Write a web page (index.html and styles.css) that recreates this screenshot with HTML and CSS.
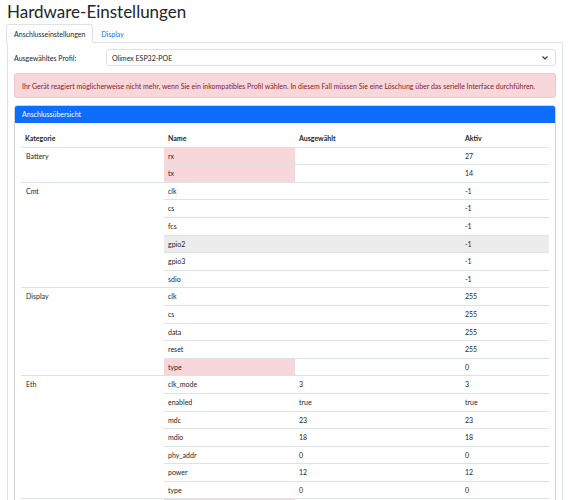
FILE: index.html
```html
<!DOCTYPE html>
<html lang="de">
<head>
    <meta charset="UTF-8">
    <meta name="viewport" content="width=device-width, initial-scale=1.0">
    <title>Hardware-Einstellungen</title>
    <link rel="stylesheet" href="styles.css">
</head>
<body>

<div class="page">
    <h1 class="title">Hardware-Einstellungen</h1>

    <ul class="tabs">
        <li class="tab active">Anschlusseinstellungen</li>
        <li class="tab">Display</li>
    </ul>

    <div class="tab-pane">
        <div class="profile-row">
            <label class="profile-label">Ausgewähltes Profil:</label>
            <div class="select">
                <span>Olimex ESP32-POE</span>
                <svg class="chevron" width="8" height="6" viewBox="0 0 8 6">
                    <polyline points="1.5,1.5 4,4 6.5,1.5" fill="none" stroke="#343a40" stroke-width="1.2"/>
                </svg>
            </div>
        </div>

        <div class="alert">
            Ihr Gerät reagiert möglicherweise nicht mehr, wenn Sie ein inkompatibles Profil wählen. In diesem Fall müssen Sie eine Löschung über das serielle Interface durchführen.
        </div>

        <div class="card">
            <div class="card-header">Anschlussübersicht</div>
            <div class="card-body">
                <table class="pins">
                    <colgroup>
                        <col class="col-cat">
                        <col class="col-name">
                        <col class="col-sel">
                        <col class="col-act">
                    </colgroup>
                    <thead>
                        <tr>
                            <th>Kategorie</th>
                            <th>Name</th>
                            <th>Ausgewählt</th>
                            <th>Aktiv</th>
                        </tr>
                    </thead>
                    <tbody>
                        <tr><td class="cat" rowspan="2">Battery</td><td class="diff">rx</td><td></td><td>27</td></tr>
                        <tr><td class="diff">tx</td><td></td><td>14</td></tr>

                        <tr><td class="cat" rowspan="6">Cmt</td><td>clk</td><td></td><td>-1</td></tr>
                        <tr><td>cs</td><td></td><td>-1</td></tr>
                        <tr><td>fcs</td><td></td><td>-1</td></tr>
                        <tr class="hover"><td>gpio2</td><td></td><td>-1</td></tr>
                        <tr><td>gpio3</td><td></td><td>-1</td></tr>
                        <tr><td>sdio</td><td></td><td>-1</td></tr>

                        <tr><td class="cat" rowspan="5">Display</td><td>clk</td><td></td><td>255</td></tr>
                        <tr><td>cs</td><td></td><td>255</td></tr>
                        <tr><td>data</td><td></td><td>255</td></tr>
                        <tr><td>reset</td><td></td><td>255</td></tr>
                        <tr><td class="diff">type</td><td></td><td>0</td></tr>

                        <tr><td class="cat" rowspan="7">Eth</td><td>clk_mode</td><td>3</td><td>3</td></tr>
                        <tr><td>enabled</td><td>true</td><td>true</td></tr>
                        <tr><td>mdc</td><td>23</td><td>23</td></tr>
                        <tr><td>mdio</td><td>18</td><td>18</td></tr>
                        <tr><td>phy_addr</td><td>0</td><td>0</td></tr>
                        <tr><td>power</td><td>12</td><td>12</td></tr>
                        <tr><td>type</td><td>0</td><td>0</td></tr>

                        <tr><td class="cat" rowspan="2">Led</td><td class="diff">led0</td><td></td><td>-1</td></tr>
                        <tr><td>led1</td><td></td><td>-1</td></tr>
                    </tbody>
                </table>
            </div>
        </div>
    </div>
</div>

</body>
</html>
```

FILE: styles.css
```css
body {
    margin: 0;
    font-family: Lato, "Open Sans", sans-serif;
    color: #212529;
    background: #fff;
    font-size: 7px;
}
.page {
    padding: 0 5px 0 7px;
}
.title {
    margin: 0;
    font-size: 17px;
    font-weight: 400;
    line-height: 24px;
}
.tabs {
    display: flex;
    list-style: none;
    margin: 0 0 -1px 0;
    padding: 0;
}
.tab {
    padding: 3px 7px 2px 7px;
    line-height: 12px;
    border: 1px solid transparent;
    border-radius: 3px 3px 0 0;
    color: #0d6efd;
}
.tab.active {
    color: #212529;
    background: #fff;
    border-color: #dee2e6 #dee2e6 #fff;
    margin-left: -1px;
}
.tab-pane {
    border: 1px solid #dee2e6;
    padding: 6px 6px 0 6px;
}
.profile-row {
    display: flex;
    align-items: center;
}
.profile-label {
    width: 92px;
}
.select {
    flex: 1;
    display: flex;
    justify-content: space-between;
    align-items: center;
    height: 15px;
    padding: 0 6px 0 5px;
    border: 1px solid #dee2e6;
    border-radius: 3px;
}
.alert {
    margin-top: 7px;
    height: 23px;
    display: flex;
    align-items: center;
    padding: 0 7px;
    background: #f8d7da;
    border: 1px solid #f5c2c7;
    border-radius: 3px;
    color: #842029;
    white-space: nowrap;
}
.card {
    margin-top: 7px;
    border: 1px solid rgba(0, 0, 0, 0.175);
    border-radius: 3px;
}
.card-header {
    background: #0d6efd;
    color: #fff;
    height: 17px;
    line-height: 17px;
    padding: 0 7px;
    border-radius: 2px 2px 0 0;
}
.card-body {
    padding: 7px 6px 6px 6px;
}
.pins {
    width: 100%;
    border-collapse: collapse;
    table-layout: fixed;
}
.col-cat { width: 143px; }
.col-name { width: 131px; }
.col-sel { width: 166px; }
.col-act { width: 88px; }
.pins th, .pins td {
    text-align: left;
    vertical-align: top;
    padding: 3px 4px;
    line-height: 10.6px;
    border-bottom: 1px solid #dee2e6;
}
.pins th {
    font-weight: 700;
}
.pins td.cat {
    padding-left: 5px;
}
.pins td.diff {
    background: #f8d7da;
}
.pins tr.hover td {
    background: #ececec;
}
```
